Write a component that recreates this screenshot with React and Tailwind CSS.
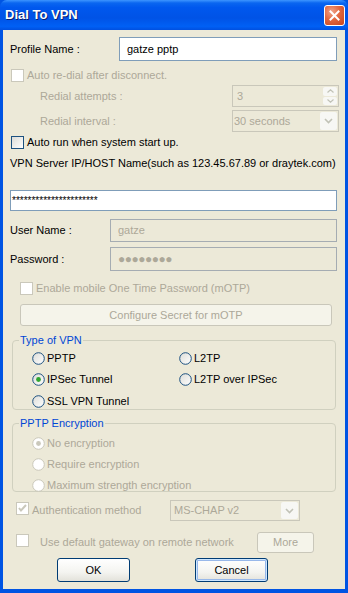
import React from "react";

const font = { fontFamily: '"Liberation Sans", Arial, sans-serif' };

function Check({ checked = false, disabled = false }) {
  return (
    <span
      className={
        "relative inline-block w-[13px] h-[13px] shrink-0 border " +
        (disabled
          ? "border-[#CAC8BB] bg-white"
          : "border-[#1C5180] bg-[linear-gradient(135deg,#DCDCD7_0%,#FFFFFF_100%)]")
      }
    >
      {checked && (
        <svg width="11" height="11" viewBox="0 0 11 11" className="absolute left-0 top-0">
          <path d="M2 5 L4 7.5 L9 2" fill="none" stroke={disabled ? "#CAC8BB" : "#21A121"} strokeWidth="2" />
        </svg>
      )}
    </span>
  );
}

function Radio({ checked = false, disabled = false, label }) {
  return (
    <div className="flex items-center h-[14px]">
      <svg width="13" height="13" viewBox="0 0 13 13" className="shrink-0">
        <defs>
          <linearGradient id="rg" x1="0" y1="0" x2="1" y2="1">
            <stop offset="0" stopColor="#DCDCD7" />
            <stop offset="1" stopColor="#FFFFFF" />
          </linearGradient>
        </defs>
        <circle
          cx="6.5"
          cy="6.5"
          r="5.8"
          fill={disabled ? "#FFFFFF" : "url(#rg)"}
          stroke={disabled ? "#CAC8BB" : "#1C5180"}
          strokeWidth="1"
        />
        {checked && <circle cx="6.5" cy="6.5" r="2.4" fill={disabled ? "#CAC8BB" : "#2FA62F"} />}
      </svg>
      <span className={"ml-[2px] text-[11px] " + (disabled ? "text-[#ACA899]" : "text-black")}>{label}</span>
    </div>
  );
}

function XPButton({ children, disabled = false, focused = false, className = "" }) {
  return (
    <div
      className={
        "flex items-center justify-center rounded-[3px] border text-[11px] " +
        (disabled
          ? "border-[#C9C7BA] bg-[#F5F4EA] text-[#ACA899] "
          : "border-[#003C74] bg-[linear-gradient(to_bottom,#FFFFFF_0%,#F4F4F0_60%,#E3E2DA_100%)] text-black ") +
        (focused ? "shadow-[inset_0_0_0_1px_#CEE7FF,inset_0_0_0_2px_#98B8EA] " : "") +
        className
      }
    >
      {children}
    </div>
  );
}

function GroupBox({ title, children, className = "" }) {
  return (
    <fieldset className={"mx-[9px] rounded-[4px] border border-[#D0D0BF] " + className}>
      <legend className="ml-[6px] px-[1px] text-[11px] leading-[13px] text-[#0046D5]">{title}</legend>
      {children}
    </fieldset>
  );
}

function ChevronDown({ color = "#C1C2B6" }) {
  return (
    <svg width="9" height="6" viewBox="0 0 9 6">
      <path d="M1 1 L4.5 4.5 L8 1" fill="none" stroke={color} strokeWidth="1.6" />
    </svg>
  );
}

export default function App() {
  return (
    <div style={font} className="w-[348px] h-[593px] flex flex-col bg-[#0054E3] overflow-hidden select-none">
      {/* Title bar */}
      <div className="h-[30px] shrink-0 flex items-center justify-between pl-[5px] pr-[3px] rounded-t-[7px] bg-[linear-gradient(to_bottom,#3D95FF_0%,#0A66F0_10%,#0058EE_25%,#0053E6_60%,#0060F5_88%,#0050E0_100%)]">
        <span className="text-white font-bold text-[13px] [text-shadow:1px_1px_0_#0A1E6E]">
          Dial To VPN
        </span>
        <div className="w-[21px] h-[21px] rounded-[3px] border border-white flex items-center justify-center bg-[radial-gradient(circle_at_35%_30%,#F0A48A_0%,#E2673F_45%,#C8441D_100%)]">
          <svg width="11" height="11" viewBox="0 0 11 11">
            <path d="M1.5 1.5 L9.5 9.5 M9.5 1.5 L1.5 9.5" stroke="white" strokeWidth="2" strokeLinecap="square" />
          </svg>
        </div>
      </div>

      {/* Body */}
      <div className="flex-1 mx-[3px] mb-[4px] bg-[#ECE9D8] text-[11px] text-black flex flex-col">
        {/* Profile name */}
        <div className="mt-[7px] flex items-center">
          <span className="ml-[7px] w-[109px]">Profile Name :</span>
          <div className="w-[218px] h-[24px] border border-[#7F9DB9] bg-white flex items-center pl-[7px] text-[11px]">
            gatze pptp
          </div>
        </div>

        {/* Auto re-dial */}
        <div className="mt-[8px] flex items-center h-[13px] ml-[8px]">
          <Check disabled />
          <span className="ml-[3px] text-[#ACA899]">Auto re-dial after disconnect.</span>
        </div>

        {/* Redial attempts */}
        <div className="mt-[3px] flex items-center h-[22px]">
          <span className="ml-[37px] w-[192px] text-[#ACA899]">Redial attempts :</span>
          <div className="w-[107px] h-[22px] border border-[#C9C7BA] flex items-center justify-between">
            <span className="pl-[4px] text-[#ACA899]">3</span>
            <div className="w-[16px] h-full flex flex-col p-[1px] gap-[1px]">
              <div className="flex-1 rounded-[2px] bg-[#F7F7F4] flex items-center justify-center">
                <svg width="7" height="4" viewBox="0 0 7 4">
                  <path d="M0.5 3.5 L3.5 0.8 L6.5 3.5" fill="none" stroke="#C1C2B6" strokeWidth="1.2" />
                </svg>
              </div>
              <div className="flex-1 rounded-[2px] bg-[#F7F7F4] flex items-center justify-center">
                <svg width="7" height="4" viewBox="0 0 7 4">
                  <path d="M0.5 0.5 L3.5 3.2 L6.5 0.5" fill="none" stroke="#C1C2B6" strokeWidth="1.2" />
                </svg>
              </div>
            </div>
          </div>
        </div>

        {/* Redial interval */}
        <div className="mt-[3px] flex items-center h-[22px]">
          <span className="ml-[37px] w-[192px] text-[#ACA899]">Redial interval :</span>
          <div className="w-[107px] h-[22px] border border-[#C9C7BA] flex items-center justify-between">
            <span className="pl-[1px] text-[11px] text-[#ACA899]">30 seconds</span>
            <div className="w-[17px] h-[18px] mr-[1px] rounded-[2px] bg-[#F7F7F4] flex items-center justify-center">
              <ChevronDown />
            </div>
          </div>
        </div>

        {/* Auto run */}
        <div className="mt-[4px] flex items-center h-[13px] ml-[8px]">
          <Check />
          <span className="ml-[3px] text-[11px]">Auto run when system start up.</span>
        </div>

        {/* VPN server */}
        <div className="mt-[7px] ml-[7px] h-[14px] leading-[14px]">
          VPN Server IP/HOST Name(such as 123.45.67.89 or draytek.com)
        </div>
        <div className="mt-[20px] ml-[7px] w-[327px] h-[21px] border border-[#7F9DB9] bg-white flex items-center pl-[1px] text-[10px] leading-none">
          **********************
        </div>

        {/* User Name */}
        <div className="mt-[8px] flex items-center">
          <span className="ml-[7px] w-[100px]">User Name :</span>
          <div className="w-[227px] h-[23px] border border-[#A5ACB2] flex items-center pl-[7px] text-[#ACA899]">
            gatze
          </div>
        </div>

        {/* Password */}
        <div className="mt-[5px] flex items-center">
          <span className="ml-[7px] w-[100px]">Password :</span>
          <div className="w-[227px] h-[24px] border border-[#A5ACB2] flex items-center pl-[7px] text-[#ACA899] text-[12px] tracking-[-0.5px]">
            ●●●●●●●●
          </div>
        </div>

        {/* mOTP */}
        <div className="mt-[11px] flex items-center h-[13px] ml-[17px]">
          <Check disabled />
          <span className="ml-[3px] text-[#ACA899]">Enable mobile One Time Password (mOTP)</span>
        </div>
        <XPButton disabled className="mt-[9px] ml-[17px] w-[312px] h-[22px]">
          Configure Secret for mOTP
        </XPButton>

        {/* Type of VPN */}
        <GroupBox title="Type of VPN" className="mt-[8px] h-[76px]">
          <div className="grid grid-cols-[147px_1fr] gap-y-[7.5px] pl-[19px] pt-[4px]">
            <Radio label="PPTP" />
            <Radio label="L2TP" />
            <Radio label="IPSec Tunnel" checked />
            <Radio label="L2TP over IPSec" />
            <Radio label="SSL VPN Tunnel" />
          </div>
        </GroupBox>

        {/* PPTP Encryption */}
        <GroupBox title="PPTP Encryption" className="mt-[7px] h-[75px]">
          <div className="flex flex-col gap-[7px] pl-[19px] pt-[6px]">
            <Radio label="No encryption" checked disabled />
            <Radio label="Require encryption" disabled />
            <Radio label="Maximum strength encryption" disabled />
          </div>
        </GroupBox>

        {/* Authentication */}
        <div className="mt-[8px] flex items-center h-[21px]">
          <span className="ml-[13px]">
            <Check checked disabled />
          </span>
          <span className="ml-[3px] w-[138px] text-[#ACA899]">Authentication method</span>
          <div className="w-[130px] h-[21px] border border-[#C9C7BA] flex items-center justify-between">
            <span className="pl-[3px] text-[#ACA899]">MS-CHAP v2</span>
            <div className="w-[17px] h-[17px] mr-[1px] rounded-[2px] bg-[#F7F7F4] flex items-center justify-center">
              <ChevronDown />
            </div>
          </div>
        </div>

        {/* Default gateway */}
        <div className="mt-[11px] flex items-center h-[21px]">
          <span className="ml-[13px]">
            <Check disabled />
          </span>
          <span className="ml-[11px] w-[217px] text-[#ACA899]">Use default gateway on remote network</span>
          <XPButton disabled className="w-[57px] h-[21px]">More</XPButton>
        </div>

        {/* OK / Cancel */}
        <div className="mt-[5px] flex items-center">
          <XPButton className="ml-[54px] w-[73px] h-[24px]">OK</XPButton>
          <XPButton focused className="ml-[65px] w-[73px] h-[24px]">Cancel</XPButton>
        </div>
      </div>
    </div>
  );
}
